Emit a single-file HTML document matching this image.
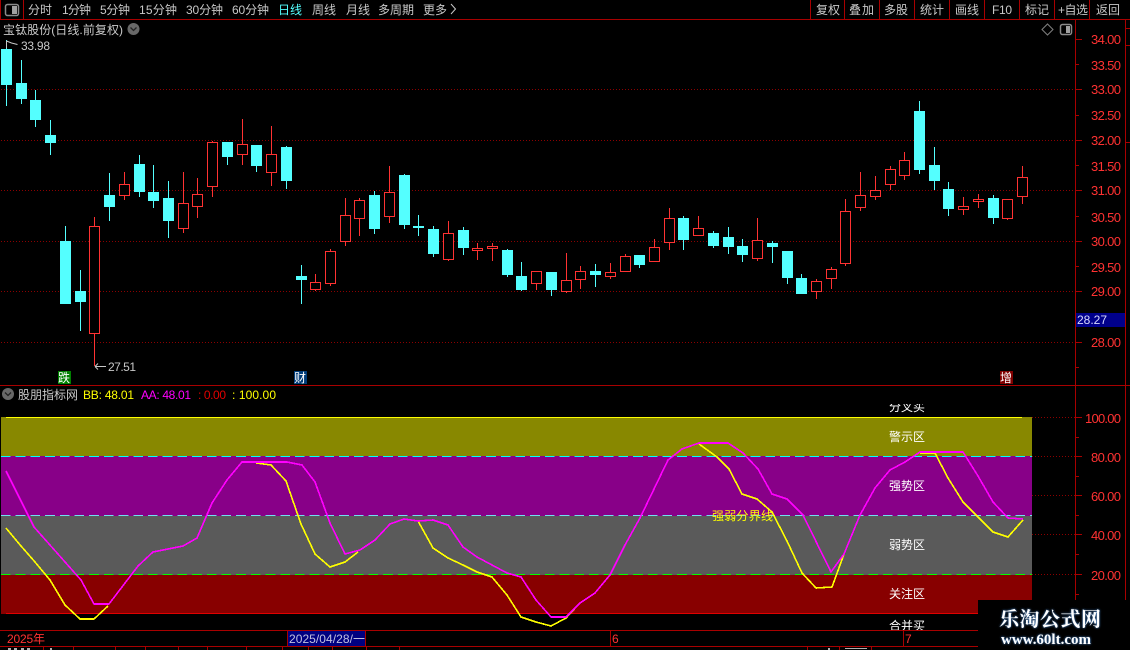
<!DOCTYPE html>
<html>
<head>
<meta charset="utf-8">
<style>
html,body{margin:0;padding:0;background:#000;width:1130px;height:650px;overflow:hidden}
svg{display:block}
text{font-family:"Liberation Sans","Noto Sans CJK SC",sans-serif;font-size:12px}
.m{fill:#c8c8c8}
.p{fill:#ff3232;font-size:13px}
.w{fill:#fff}
</style>
</head>
<body>
<svg width="1130" height="650" viewBox="0 0 1130 650" xmlns="http://www.w3.org/2000/svg">
<rect width="1130" height="650" fill="#000"/>
<g shape-rendering="crispEdges">
<!-- grid -->
<g stroke="#8c0000" stroke-width="1" stroke-dasharray="1 2" fill="none">
<path d="M1 89.5H1075M1 140.5H1075M1 190.5H1075M1 241.5H1075M1 291.5H1075M1 342.5H1075"/>
<path d="M1032 417.5H1075M1032 456.5H1075M1032 495.5H1075M1032 534.5H1075M1032 574.5H1075"/>
</g>
<!-- frame -->
<g fill="#a80000">
<rect x="0" y="19" width="1130" height="1"/>
<rect x="0" y="0" width="1" height="19"/>
<rect x="23" y="0" width="1" height="19"/>
<rect x="810" y="0" width="1" height="19"/><rect x="844" y="0" width="1" height="19"/><rect x="879" y="0" width="1" height="19"/><rect x="914" y="0" width="1" height="19"/><rect x="949" y="0" width="1" height="19"/><rect x="984" y="0" width="1" height="19"/><rect x="1019" y="0" width="1" height="19"/><rect x="1054" y="0" width="1" height="19"/><rect x="1089" y="0" width="1" height="19"/>
<rect x="1075" y="20" width="1" height="610"/>
<rect x="1125" y="20" width="1" height="610"/>
<rect x="0" y="385" width="1126" height="1"/>
<rect x="1126" y="28" width="4" height="1"/><rect x="1126" y="45" width="4" height="1"/><rect x="1126" y="142" width="4" height="1"/><rect x="1126" y="385" width="4" height="1"/>
<!-- price ticks -->
<path d="M1076 39h6v1h-6zM1076 64h3v1h-3zM1076 89h6v1h-6zM1076 115h3v1h-3zM1076 140h6v1h-6zM1076 165h3v1h-3zM1076 190h6v1h-6zM1076 216h3v1h-3zM1076 241h6v1h-6zM1076 266h3v1h-3zM1076 291h6v1h-6zM1076 317h3v1h-3zM1076 342h6v1h-6zM1076 367h3v1h-3z"/>
<path d="M1076 417h6v1h-6zM1076 437h3v1h-3zM1076 456h6v1h-6zM1076 476h3v1h-3zM1076 495h6v1h-6zM1076 515h3v1h-3zM1076 534h6v1h-6zM1076 554h3v1h-3zM1076 574h6v1h-6zM1076 594h3v1h-3z"/>
</g>
<!-- cyan candles -->
<path fill="#54ffff" d="M1 49h11v36h-11zM6 40h1v66h-1zM16 83h11v16h-11zM21 60h1v44h-1zM30 100h11v20h-11zM35 90h1v37h-1zM45 135h11v8h-11zM50 120h1v35h-1zM60 241h11v63h-11zM65 226h1v15h-1zM75 291h11v11h-11zM80 270h1v61h-1zM104 195h11v12h-11zM109 173h1v48h-1zM134 164h11v28h-11zM139 155h1v42h-1zM148 192h11v9h-11zM153 165h1v43h-1zM163 198h11v23h-11zM168 181h1v57h-1zM222 142h11v15h-11zM227 142h1v23h-1zM251 145h11v21h-11zM256 145h1v27h-1zM281 147h11v34h-11zM286 146h1v43h-1zM296 276h11v4h-11zM301 265h1v39h-1zM369 195h11v34h-11zM374 191h1v43h-1zM399 175h11v50h-11zM404 174h1v55h-1zM413 226h11v2h-11zM418 215h1v21h-1zM428 229h11v25h-11zM433 226h1v31h-1zM458 230h11v18h-11zM463 227h1v28h-1zM502 250h11v25h-11zM507 249h1v28h-1zM516 276h11v14h-11zM521 262h1v29h-1zM546 272h11v18h-11zM551 272h1v24h-1zM590 271h11v4h-11zM595 264h1v23h-1zM634 255h11v10h-11zM639 255h1v13h-1zM678 218h11v22h-11zM683 216h1v34h-1zM708 233h11v13h-11zM713 231h1v17h-1zM723 237h11v10h-11zM728 227h1v27h-1zM737 246h11v9h-11zM742 239h1v23h-1zM767 243h11v4h-11zM772 241h1v22h-1zM782 251h11v27h-11zM787 251h1v33h-1zM796 278h11v16h-11zM801 274h1v20h-1zM914 111h11v59h-11zM919 101h1v73h-1zM929 165h11v16h-11zM934 147h1v43h-1zM943 189h11v20h-11zM948 182h1v34h-1zM988 198h11v20h-11zM993 195h1v29h-1z"/>
<!-- red wicks -->
<path fill="#ff3232" d="M94 217h1v149h-1zM124 172h1v28h-1zM183 172h1v61h-1zM197 178h1v40h-1zM212 141h1v56h-1zM242 119h1v46h-1zM271 126h1v60h-1zM315 274h1v17h-1zM330 249h1v37h-1zM345 198h1v48h-1zM359 198h1v38h-1zM389 166h1v57h-1zM448 221h1v40h-1zM477 243h1v17h-1zM492 243h1v18h-1zM536 271h1v19h-1zM566 253h1v40h-1zM580 266h1v23h-1zM610 263h1v16h-1zM625 254h1v18h-1zM654 239h1v23h-1zM669 208h1v42h-1zM698 216h1v20h-1zM757 218h1v43h-1zM816 279h1v20h-1zM831 267h1v22h-1zM845 199h1v67h-1zM860 172h1v39h-1zM875 176h1v24h-1zM890 166h1v24h-1zM904 152h1v28h-1zM963 197h1v18h-1zM978 194h1v14h-1zM1007 199h1v21h-1zM1022 166h1v38h-1z"/>
<!-- red bodies -->
<path fill="#000" stroke="#ff3232" stroke-width="1" d="M89.5 226.5h10v107h-10zM119.5 184.5h10v11h-10zM178.5 203.5h10v25h-10zM192.5 194.5h10v12h-10zM207.5 142.5h10v44h-10zM237.5 144.5h10v10h-10zM266.5 154.5h10v18h-10zM310.5 282.5h10v7h-10zM325.5 251.5h10v32h-10zM340.5 215.5h10v26h-10zM354.5 200.5h10v18h-10zM384.5 192.5h10v24h-10zM443.5 233.5h10v26h-10zM472.5 248.5h10v2h-10zM487.5 246.5h10v2h-10zM531.5 271.5h10v12h-10zM561.5 280.5h10v11h-10zM575.5 271.5h10v8h-10zM605.5 272.5h10v4h-10zM620.5 256.5h10v15h-10zM649.5 247.5h10v14h-10zM664.5 218.5h10v24h-10zM693.5 228.5h10v7h-10zM752.5 240.5h10v18h-10zM811.5 281.5h10v10h-10zM826.5 269.5h10v9h-10zM840.5 211.5h10v52h-10zM855.5 195.5h10v12h-10zM870.5 190.5h10v6h-10zM885.5 169.5h10v15h-10zM899.5 160.5h10v15h-10zM958.5 206.5h10v3h-10zM973.5 199.5h10v2h-10zM1002.5 199.5h10v19h-10zM1017.5 177.5h10v19h-10z"/>
<!-- bands -->
<rect x="1" y="417" width="1031" height="39" fill="#888800"/>
<rect x="1" y="456" width="1031" height="60" fill="#880088"/>
<rect x="1" y="516" width="1031" height="59" fill="#5a5a5a"/>
<rect x="1" y="575" width="1031" height="39" fill="#880000"/>
<rect x="6" y="417" width="1016" height="1" fill="#ffff00"/>
<rect x="6" y="613" width="1026" height="1" fill="#e00000"/>
<path d="M1 456.5H1032" stroke="#00ffff" stroke-width="1" stroke-dasharray="9.7 5" fill="none"/>
<path d="M1 515.5H1032" stroke="#70e0f0" stroke-width="1" stroke-dasharray="9.7 5" fill="none"/>
<path d="M1 574.5H1032" stroke="#00ff00" stroke-width="1" stroke-dasharray="9.7 5" fill="none"/>
<!-- tags -->
<rect x="58" y="371" width="13" height="13" fill="#008000"/>
<rect x="294" y="371" width="13" height="13" fill="#003c78"/>
<rect x="1000" y="371" width="13" height="13" fill="#800000"/>
<!-- price box -->
<rect x="1076" y="313" width="49" height="14" fill="#00008b"/>
<!-- time axis -->
<rect x="0" y="630" width="978" height="1" fill="#a80000"/>
<rect x="0" y="646" width="978" height="1" fill="#a80000"/>
<rect x="287" y="631" width="78" height="15" fill="#000080"/>
<rect x="287" y="631" width="1" height="15" fill="#a80000"/>
<rect x="365" y="631" width="1" height="15" fill="#a80000"/>
<rect x="610" y="631" width="1" height="15" fill="#a80000"/>
<rect x="903" y="631" width="1" height="15" fill="#a80000"/>
<path fill="#a80000" d="M43 647h1v3h-1zM73 647h1v3h-1zM115 647h1v3h-1zM145 647h1v3h-1zM178 647h1v3h-1zM207 647h1v3h-1zM246 647h1v3h-1zM282 647h1v3h-1zM308 647h1v3h-1zM332 647h1v3h-1zM366 647h1v3h-1zM399 647h1v3h-1zM807 647h1v3h-1zM839 647h1v3h-1zM871 647h1v3h-1z"/>
<path fill="#b0b0b0" d="M8 648h3v2h-3zM14 648h3v2h-3zM21 648h3v2h-3zM27 648h3v2h-3zM50 648h2v2h-2zM828 648h2v2h-2zM845 648h22v1h-22z"/>
</g>
<!-- icons -->
<g fill="none">
<rect x="5.5" y="4.5" width="13" height="11" rx="2" stroke="#8a8a8a" stroke-width="1.5"/>
<rect x="12" y="6" width="5" height="8" fill="#a0a0a0"/>
<path d="M1042 29.5l5.5-5.5 5.5 5.5-5.5 5.5z" stroke="#808080"/>
<rect x="1060.5" y="24.5" width="11" height="10" rx="2" stroke="#8a8a8a" stroke-width="1.5"/>
<rect x="1066" y="26" width="4" height="7" fill="#a0a0a0"/>
<circle cx="133.500" cy="29" r="6" fill="#686868"/>
<path d="M130.500 27.500l3 3 3-3" stroke="#222" stroke-width="1.300"/>
<circle cx="8" cy="394" r="6" fill="#686868"/>
<path d="M5 392.500l3 3 3-3" stroke="#222" stroke-width="1.300"/>
<path d="M451 4l4.500 5-4.500 5" stroke="#c8c8c8"/>
<!-- flag and low arrow -->
<path d="M6.500 41v7M6.500 41l5 2 6 1.500" stroke="#c8c8c8"/>
<path d="M95 366.500h11M95 366.500l3-3M95 366.500l3 3" stroke="#c8c8c8"/>
</g>
<!-- indicator lines -->
<g fill="none" stroke-width="1.600" stroke-linejoin="round" shape-rendering="crispEdges">
<polyline stroke="#ffff00" points="6,528 21,546 35,562 50,580 65,605 80,619 94,619 108,606"/>
<polyline stroke="#ffff00" points="256,463 271,465 286,481 301,524 315,554 330,567 345,562 358,552"/>
<polyline stroke="#ffff00" points="418,521 433,548 448,558 463,565 477,572 492,577 507,595 521,617 536,622 551,626 566,618 580,603"/>
<polyline stroke="#ffff00" points="699,444 717,457 729,469 742,494 757,499 772,512 787,541 802,573 816,588 832,587 844,554"/>
<polyline stroke="#ffff00" points="920,453 935,453 948,478 963,502 978,517 993,532 1008,537 1023,520"/>
<polyline stroke="#ff00ff" points="6,471 34,527 81,580 94,604 109,604 138,566 153,552 183,546 197,538 212,503 227,480 242,462 287,462 302,465 315,482 330,523 345,554 360,550 375,540 390,524 404,519 418,521 433,520 448,525 463,547 477,557 492,565 507,573 521,577 536,600 551,617 566,617 580,603 595,593 610,575 625,545 640,518 668,460 682,449 699,443 728,443 743,453 758,469 772,494 787,499 803,515 831,572 844,554 860,515 875,488 890,470 905,462 920,452 963,452 978,476 993,502 1008,518 1023,519"/>
</g>
<!-- top bar text -->
<g class="m">
<text class="m" x="28" y="14" textLength="24">分时</text>
<text class="m" x="62" y="14" textLength="29">1分钟</text>
<text class="m" x="100" y="14" textLength="30">5分钟</text>
<text class="m" x="139" y="14" textLength="38">15分钟</text>
<text class="m" x="186" y="14" textLength="37">30分钟</text>
<text class="m" x="232" y="14" textLength="37">60分钟</text>
<text x="278" y="14" fill="#54ffff" textLength="24">日线</text>
<text class="m" x="312" y="14" textLength="24">周线</text>
<text class="m" x="346" y="14" textLength="24">月线</text>
<text class="m" x="378" y="14" textLength="36">多周期</text>
<text class="m" x="423" y="14" textLength="24">更多</text>
<text class="m" x="816" y="14" textLength="24">复权</text>
<text class="m" x="849" y="14" textLength="25">叠加</text>
<text class="m" x="884" y="14" textLength="24">多股</text>
<text class="m" x="920" y="14" textLength="24">统计</text>
<text class="m" x="955" y="14" textLength="24">画线</text>
<text class="m" x="992" y="14" textLength="20">F10</text>
<text class="m" x="1025" y="14" textLength="24">标记</text>
<text class="m" x="1058" y="14" textLength="30">+自选</text>
<text class="m" x="1096" y="14" textLength="24">返回</text>
<text class="m" x="3" y="34" textLength="120">宝钛股份(日线.前复权)</text>
<text class="m" x="21" y="50" textLength="29">33.98</text>
<text class="m" x="108" y="371" textLength="28">27.51</text>
<text class="m" x="18" y="399" textLength="60">股朋指标网</text>
</g>
<text x="83" y="399" fill="#ffff00" textLength="51">BB: 48.01</text>
<text x="141" y="399" fill="#ff00ff" textLength="50">AA: 48.01</text>
<text x="198" y="399" fill="#e00000" textLength="28">: 0.00</text>
<text x="232" y="399" fill="#ffff00" textLength="44">: 100.00</text>
<!-- tags -->
<text x="58" y="382" class="w">跌</text>
<text x="294" y="382" class="w">财</text>
<text x="1000" y="382" class="w">增</text>
<!-- price axis -->
<g>
<text class="p" x="1091" y="44" textLength="30">34.00</text>
<text class="p" x="1091" y="70" textLength="30">33.50</text>
<text class="p" x="1091" y="94" textLength="30">33.00</text>
<text class="p" x="1091" y="120" textLength="30">32.50</text>
<text class="p" x="1091" y="145" textLength="30">32.00</text>
<text class="p" x="1091" y="171" textLength="30">31.50</text>
<text class="p" x="1091" y="195" textLength="30">31.00</text>
<text class="p" x="1091" y="222" textLength="30">30.50</text>
<text class="p" x="1091" y="246" textLength="30">30.00</text>
<text class="p" x="1091" y="272" textLength="30">29.50</text>
<text class="p" x="1091" y="296" textLength="30">29.00</text>
<text class="p" x="1091" y="347" textLength="30">28.00</text>
<text x="1077" y="324" fill="#d8d8ff" textLength="30">28.27</text>
<text class="p" x="1085" y="423" textLength="36">100.00</text>
<text class="p" x="1091" y="462" textLength="30">80.00</text>
<text class="p" x="1091" y="501" textLength="30">60.00</text>
<text class="p" x="1091" y="540" textLength="30">40.00</text>
<text class="p" x="1091" y="580" textLength="30">20.00</text>
</g>
<!-- band labels -->
<defs>
<clipPath id="c1"><rect x="880" y="404" width="60" height="9"/></clipPath>
<clipPath id="c2"><rect x="880" y="614" width="60" height="16"/></clipPath>
</defs>
<text class="w" x="889" y="411" textLength="36" clip-path="url(#c1)">分叉买</text>
<text class="w" x="889" y="441" textLength="36">警示区</text>
<text class="w" x="889" y="490" textLength="36">强势区</text>
<text class="w" x="889" y="549" textLength="36">弱势区</text>
<text class="w" x="889" y="598" textLength="36">关注区</text>
<text class="w" x="889" y="630" textLength="36" clip-path="url(#c2)">合并买</text>
<text x="712" y="520" fill="#ffff00" textLength="61">强弱分界线</text>
<!-- time axis text -->
<text x="7" y="643" fill="#ff3232" textLength="38">2025年</text>
<text x="289" y="643" fill="#c0c0e0" textLength="76">2025/04/28/一</text>
<text x="612" y="643" fill="#ff3232">6</text>
<text x="905" y="643" fill="#ff3232">7</text>
<!-- watermark -->
<rect x="978" y="600" width="152" height="50" fill="#000"/>
<text x="999" y="626" fill="#fff" style="font-family:'Liberation Serif','Noto Serif CJK SC',serif;font-size:20px;font-weight:700;text-shadow:0 0 2px #4a90e0" textLength="102">乐淘公式网</text>
<text x="1001" y="644" fill="#fff" style="font-family:'Liberation Serif',serif;font-size:15px;font-weight:700;text-shadow:0 0 2px #4a90e0" textLength="90">www.60lt.com</text>
</svg>
</body>
</html>
